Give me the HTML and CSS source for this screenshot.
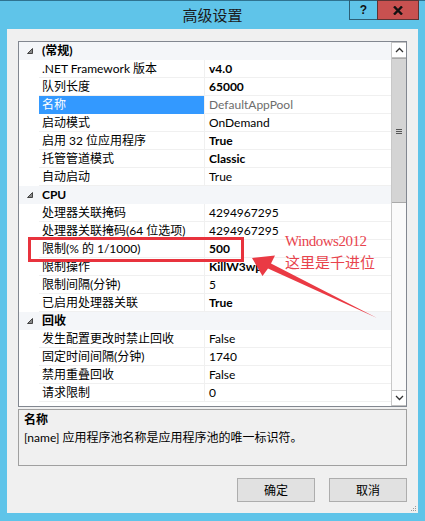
FILE: index.html
```html
<!DOCTYPE html>
<html lang="zh-CN">
<head>
<meta charset="utf-8">
<title>高级设置</title>
<link rel="stylesheet" href="styles.css">
</head>
<body>
<div class="window">
  <div class="titlebar">
    <div class="title">高级设置</div>
    <div class="caption">
      <div class="cap help">?</div>
      <div class="cap close">
        <svg width="10" height="9" viewBox="0 0 10 9"><path d="M1 0.5 L9 8.5 M9 0.5 L1 8.5" stroke="#111" stroke-width="2.4" fill="none"/></svg>
      </div>
    </div>
  </div>
  <div class="content">
    <div class="grid">
      <div class="rows">
        <div class="row cat"><span class="gut"><svg width="6" height="6" viewBox="0 0 6 6"><path d="M5.5 0.5 L5.5 5.5 L0.5 5.5 Z" fill="#8a8a8a" stroke="#444" stroke-width="1"/></svg></span><span class="name">(常规)</span></div>
        <div class="row"><span class="gut"></span><span class="name">.NET Framework 版本</span><span class="val b">v4.0</span></div>
        <div class="row"><span class="gut"></span><span class="name">队列长度</span><span class="val b">65000</span></div>
        <div class="row sel"><span class="gut"></span><span class="name">名称</span><span class="val ro">DefaultAppPool</span></div>
        <div class="row"><span class="gut"></span><span class="name">启动模式</span><span class="val">OnDemand</span></div>
        <div class="row"><span class="gut"></span><span class="name">启用 32 位应用程序</span><span class="val b">True</span></div>
        <div class="row"><span class="gut"></span><span class="name">托管管道模式</span><span class="val b">Classic</span></div>
        <div class="row"><span class="gut"></span><span class="name">自动启动</span><span class="val">True</span></div>
        <div class="row cat"><span class="gut"><svg width="6" height="6" viewBox="0 0 6 6"><path d="M5.5 0.5 L5.5 5.5 L0.5 5.5 Z" fill="#8a8a8a" stroke="#444" stroke-width="1"/></svg></span><span class="name">CPU</span></div>
        <div class="row"><span class="gut"></span><span class="name">处理器关联掩码</span><span class="val">4294967295</span></div>
        <div class="row"><span class="gut"></span><span class="name">处理器关联掩码(64 位选项)</span><span class="val">4294967295</span></div>
        <div class="row"><span class="gut"></span><span class="name">限制(% 的 1/1000)</span><span class="val b">500</span></div>
        <div class="row"><span class="gut"></span><span class="name">限制操作</span><span class="val b">KillW3wp</span></div>
        <div class="row"><span class="gut"></span><span class="name">限制间隔(分钟)</span><span class="val">5</span></div>
        <div class="row"><span class="gut"></span><span class="name">已启用处理器关联</span><span class="val b">True</span></div>
        <div class="row cat"><span class="gut"><svg width="6" height="6" viewBox="0 0 6 6"><path d="M5.5 0.5 L5.5 5.5 L0.5 5.5 Z" fill="#8a8a8a" stroke="#444" stroke-width="1"/></svg></span><span class="name">回收</span></div>
        <div class="row"><span class="gut"></span><span class="name">发生配置更改时禁止回收</span><span class="val">False</span></div>
        <div class="row"><span class="gut"></span><span class="name">固定时间间隔(分钟)</span><span class="val">1740</span></div>
        <div class="row"><span class="gut"></span><span class="name">禁用重叠回收</span><span class="val">False</span></div>
        <div class="row"><span class="gut"></span><span class="name">请求限制</span><span class="val">0</span></div>
      </div>
      <div class="scroll">
        <div class="sbtn"><svg width="9" height="6" viewBox="0 0 9 6"><path d="M1 5 L4.5 1.5 L8 5" stroke="#333" stroke-width="1.3" fill="none"/></svg></div>
        <div class="thumb"><svg width="6" height="6" viewBox="0 0 6 6"><path d="M0 0.5 H6 M0 2.5 H6 M0 4.5 H6" stroke="#555" stroke-width="1"/></svg></div>
        <div class="track"></div>
        <div class="sbtn"><svg width="9" height="6" viewBox="0 0 9 6"><path d="M1 1 L4.5 4.5 L8 1" stroke="#333" stroke-width="1.3" fill="none"/></svg></div>
      </div>
    </div>
    <div class="desc">
      <div class="dt">名称</div>
      <div class="dd">[name] 应用程序池名称是应用程序池的唯一标识符。</div>
    </div>
    <div class="buttons">
      <div class="btn">确定</div>
      <div class="btn">取消</div>
    </div>
    <div class="grip">
      <svg width="7" height="7" viewBox="0 0 7 7"><g fill="#9a9a9a"><rect x="5" y="1" width="1" height="1"/><rect x="3" y="3" width="1" height="1"/><rect x="5" y="3" width="1" height="1"/><rect x="1" y="5" width="1" height="1"/><rect x="3" y="5" width="1" height="1"/><rect x="5" y="5" width="1" height="1"/></g></svg>
    </div>
  </div>
</div>
<div class="anno-box"></div>
<div class="anno-text">
  <div class="anno-en">Windows2012</div>
  <div class="anno-cn">这里是千进位</div>
</div>
<svg class="anno-arrow" width="425" height="521" viewBox="0 0 425 521">
  <path d="M252 258 L275 255.5 L271 263.5 L377 318 L268 268.5 L262.5 276 Z" fill="#ea3a44"/>
</svg>
</body>
</html>
```
FILE: styles.css
```css
html, body {
  margin: 0;
  padding: 0;
}
body {
  width: 425px;
  height: 521px;
  overflow: hidden;
  background: #5fc4e9;
  font-family: "Lato", "Noto Sans CJK SC", sans-serif;
  font-size: 12px;
  color: #000;
  position: relative;
}
.window {
  display: flex;
  flex-direction: column;
  height: 521px;
  box-sizing: border-box;
  border-top: 1px solid #2f7390;
}
.titlebar {
  position: relative;
  height: 28px;
  flex: none;
}
.title {
  text-align: center;
  font-family: "Noto Sans CJK SC", sans-serif;
  font-size: 15px;
  line-height: 27px;
  color: #1a1a1a;
}
.caption {
  position: absolute;
  top: -1px;
  right: 6px;
  display: flex;
}
.cap {
  height: 20px;
  box-sizing: border-box;
  display: flex;
  align-items: center;
  justify-content: center;
}
.help {
  width: 28px;
  border: 1px solid #2c5f76;
  border-right: none;
  font-family: "Liberation Sans", sans-serif;
  font-weight: bold;
  font-size: 12px;
  color: #111;
}
.close {
  width: 42px;
  background: #c85150;
  border: 1px solid #5b3434;
}
.content {
  position: relative;
  margin: 0 7px;
  height: 484px;
  flex: none;
  background: #f0f0f0;
  box-sizing: border-box;
  padding: 12px 11px 0 11px;
  display: flex;
  flex-direction: column;
}
.grid {
  height: 366px;
  box-sizing: border-box;
  border: 1px solid #828790;
  background: #fff;
  display: flex;
}
.rows {
  flex: 1;
  display: flex;
  flex-direction: column;
}
.row {
  display: grid;
  grid-template-columns: 20px 165px 1fr;
  height: 18px;
}
.gut {
  display: flex;
  align-items: center;
  justify-content: center;
  padding-left: 1px;
}
.name, .val {
  box-sizing: border-box;
  height: 18px;
  line-height: 17px;
  border-bottom: 1px solid #f0f0f0;
  white-space: nowrap;
  overflow: hidden;
}
.name {
  padding-left: 3px;
}
.val {
  border-left: 1px solid #f0f0f0;
  padding-left: 4px;
}
.b {
  font-weight: bold;
}
.ro {
  color: #6d6d6d;
}
.sel .name {
  background: #3399ff;
  color: #fff;
  border-bottom-color: #3399ff;
}
.cat {
  background: #f4f6f9;
  grid-template-columns: 20px 1fr;
}
.cat .name {
  font-weight: bold;
  border-bottom: none;
  line-height: 18px;
}
.scroll {
  width: 15px;
  box-sizing: border-box;
  border-left: 1px solid #c8c8c8;
  display: flex;
  flex-direction: column;
  background: #fafafa;
}
.sbtn {
  height: 16px;
  box-sizing: border-box;
  border: 1px solid #c2c2c2;
  border-left: none;
  border-right: none;
  background: #fff;
  display: flex;
  align-items: center;
  justify-content: center;
}
.thumb {
  height: 145px;
  box-sizing: border-box;
  background: #d4d4d4;
  border: 1px solid #a9a9a9;
  border-left: none;
  border-right: none;
  display: flex;
  align-items: center;
  justify-content: center;
  padding-top: 2px;
}
.track {
  flex: 1;
}
.desc {
  margin-top: 2px;
  height: 57px;
  box-sizing: border-box;
  border: 1px solid #a0a0a0;
  padding: 1px 5px 0 5px;
  line-height: 18px;
}
.dt {
  font-weight: bold;
}
.buttons {
  display: flex;
  justify-content: flex-end;
  gap: 14px;
  margin-top: 12px;
}
.btn {
  width: 78px;
  height: 24px;
  box-sizing: border-box;
  background: #e1e1e1;
  border: 1px solid #adadad;
  text-align: center;
  line-height: 22px;
  font-family: "Noto Sans CJK SC", sans-serif;
  font-size: 12px;
}
.grip {
  position: absolute;
  right: 1px;
  bottom: 1px;
  width: 7px;
  height: 7px;
}
.grip svg {
  display: block;
}
.anno-box {
  position: absolute;
  left: 28px;
  top: 237px;
  width: 216px;
  height: 25px;
  box-sizing: border-box;
  border: 3px solid #e8333d;
}
.anno-text {
  position: absolute;
  left: 285px;
  top: 231px;
  color: #e8434d;
}
.anno-en {
  font-family: "Liberation Serif", serif;
  font-size: 15px;
  letter-spacing: -0.5px;
  line-height: 20px;
}
.anno-cn {
  font-family: "Noto Sans CJK SC", sans-serif;
  font-size: 15px;
  line-height: 22px;
}
.anno-arrow {
  position: absolute;
  left: 0;
  top: 0;
  pointer-events: none;
}
```
